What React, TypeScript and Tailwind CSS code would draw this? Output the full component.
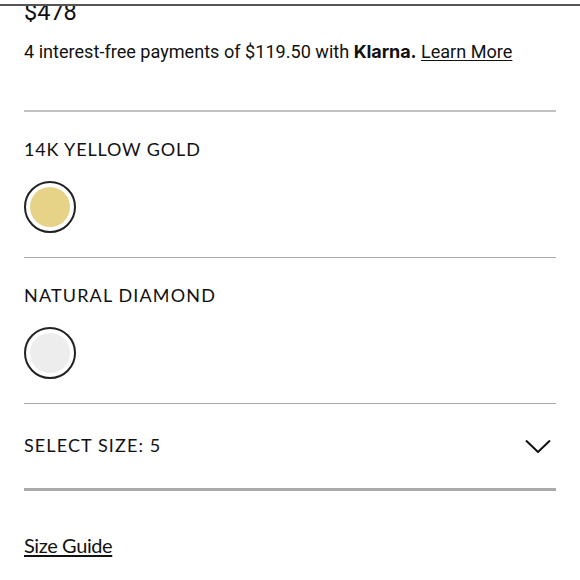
import React from 'react';

const labelFont = "font-['Lato','Noto_Sans',sans-serif] text-[18px] leading-[22px]";

function Swatch({ color }: { color: string }) {
  return (
    <div className="w-[52px] h-[52px] rounded-full border-2 border-[#222] flex items-center justify-center">
      <div className={`w-10 h-10 rounded-full ${color}`} />
    </div>
  );
}

export default function App() {
  return (
    <div className="w-[580px] h-[580px] bg-white overflow-hidden text-[#111] font-['Roboto',sans-serif]">
      <div className="mt-1 h-[2px] bg-[#555]" />
      <div className="h-[106px] mx-6 border-b-2 border-[#c2c2c2] overflow-hidden">
        <div className="-mt-[6px] h-[22px] text-[23.5px] leading-[25px]">$478</div>
        <p className="mt-[17px] text-[18.1px] leading-[26px] whitespace-nowrap">
          4 interest-free payments of $119.50 with{' '}
          <span className="font-['Inter',sans-serif] font-bold text-[18px] tracking-[-0.1px]">Klarna.</span>{' '}
          <a className="underline underline-offset-2">Learn More</a>
        </p>
      </div>

      <div className="h-[146px] mx-6 border-b border-[#aaa] pt-[26px]">
        <div className={`${labelFont} tracking-[0.85px]`}>14K YELLOW GOLD</div>
        <div className="mt-[21px]">
          <Swatch color="bg-[#e6d388]" />
        </div>
      </div>

      <div className="h-[146px] mx-6 border-b border-[#aaa] pt-[26px]">
        <div className={`${labelFont} tracking-[1.15px]`}>NATURAL DIAMOND</div>
        <div className="mt-[21px]">
          <Swatch color="bg-[#ededed]" />
        </div>
      </div>

      <div className="h-[87px] mx-6 border-b-[3px] border-[#aaa] flex items-start justify-between pt-[30px]">
        <div className={`${labelFont} tracking-[1.1px]`}>SELECT SIZE: 5</div>
        <svg width="26" height="14" viewBox="0 0 26 14" fill="none" stroke="#111" strokeWidth="2" className="mt-[5px] mr-[5px]">
          <path d="M1 1.5 L13 13 L25 1.5" />
        </svg>
      </div>

      <a className="block mx-6 mt-[41px] font-['Lato',sans-serif] text-[20px] leading-[26px] tracking-[-0.4px] underline underline-offset-2">
        Size Guide
      </a>
    </div>
  );
}
